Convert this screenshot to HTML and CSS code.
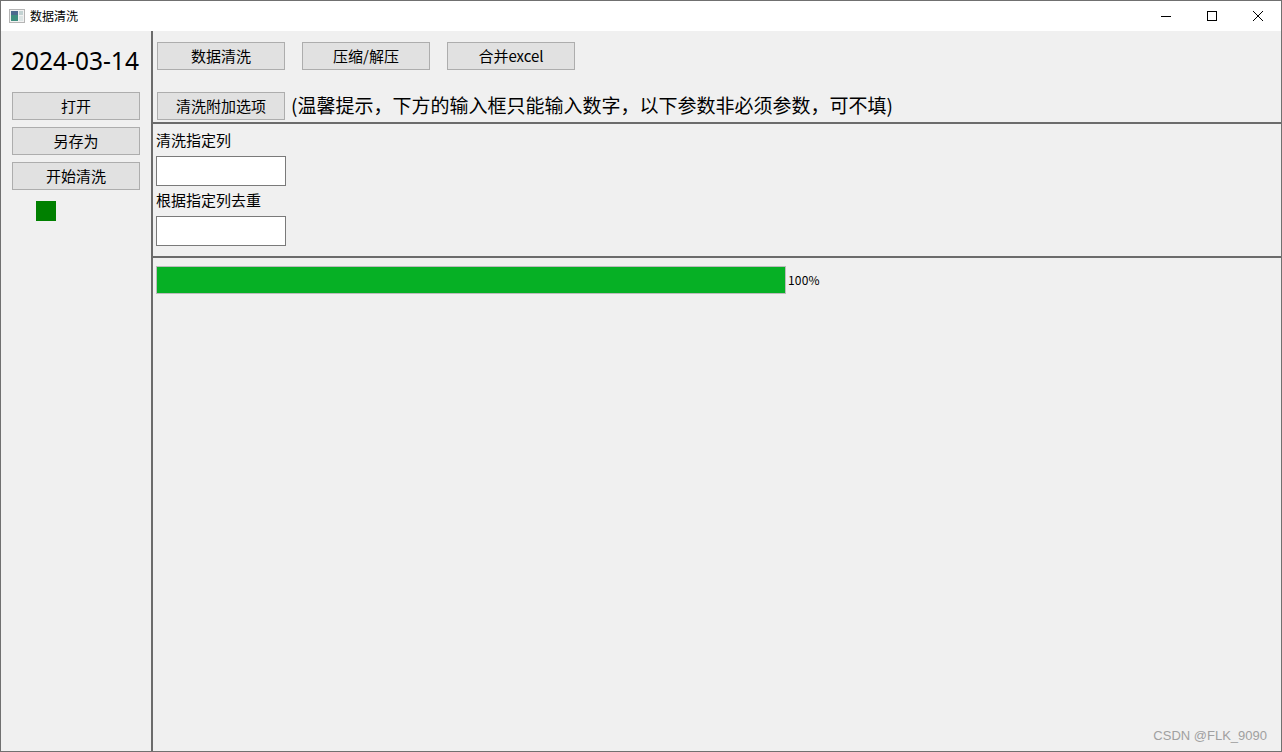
FILE: index.html
```html
<!DOCTYPE html>
<html lang="zh">

<head>
    <meta charset="utf-8">
    <meta name="viewport" content="width=device-width, initial-scale=1.0">
    <title>数据清洗</title>
    <link rel="stylesheet" href="styles.css">
</head>

<body>
    <div class="window">
        <header class="titlebar">
            <svg class="app_icon" width="16" height="14" viewBox="0 0 16 14">
                <rect x="0.5" y="0.5" width="15" height="13" fill="#f2f2f2" stroke="#b5b5b5" />
                <rect x="2" y="2" width="7" height="10" fill="#3f8f7f" />
                <rect x="2" y="2" width="7" height="4" fill="#4d6a8f" />
                <rect x="10" y="2" width="4" height="4" fill="#c3d3d3" />
                <rect x="10" y="7" width="4" height="5" fill="#dde5e5" />
            </svg>
            <span class="title">数据清洗</span>
            <div class="win_controls">
                <svg class="win_btn" width="46" height="30" viewBox="0 0 46 30">
                    <path d="M18 15.5H28" stroke="#000" fill="none" />
                </svg>
                <svg class="win_btn" width="46" height="30" viewBox="0 0 46 30">
                    <rect x="18.5" y="10.5" width="9" height="9" stroke="#000" fill="none" />
                </svg>
                <svg class="win_btn" width="46" height="30" viewBox="0 0 46 30">
                    <path d="M18 10L28 20M28 10L18 20" stroke="#000" fill="none" />
                </svg>
            </div>
        </header>

        <div class="content">
            <aside class="sidebar">
                <p class="date">2024-03-14</p>
                <button class="knap">打开</button>
                <button class="knap">另存为</button>
                <button class="knap">开始清洗</button>
                <div class="status"></div>
            </aside>

            <main class="main">
                <section class="top_section">
                    <div class="tabs">
                        <button class="knap">数据清洗</button>
                        <button class="knap">压缩/解压</button>
                        <button class="knap">合并excel</button>
                    </div>
                    <div class="hint_row">
                        <button class="knap">清洗附加选项</button>
                        <span class="hint">(温馨提示，下方的输入框只能输入数字，以下参数非必须参数，可不填)</span>
                    </div>
                </section>

                <section class="options">
                    <label class="felt_label">清洗指定列</label>
                    <input class="felt" type="text">
                    <label class="felt_label">根据指定列去重</label>
                    <input class="felt" type="text">
                </section>

                <section class="progress_section">
                    <div class="progress">
                        <div class="progress_fill"></div>
                    </div>
                    <span class="progress_text">100%</span>
                </section>
            </main>
        </div>
        <span class="watermark">CSDN @FLK_9090</span>
    </div>
</body>

</html>
```

FILE: styles.css
```css
* {
    box-sizing: border-box;
}

html,
body {
    margin: 0;
    height: 100%;
    overflow: hidden;
}

body {
    font-family: "Noto Sans CJK SC", "Liberation Sans", sans-serif;
    color: #000;
    background-color: #f0f0f0;
}

.window {
    position: relative;
    display: flex;
    flex-direction: column;
    height: 752px;
    border: 1px solid #707070;
}

.titlebar {
    display: flex;
    align-items: center;
    height: 30px;
    padding-left: 8px;
    background-color: #fff;
}

.app_icon {
    flex: none;
}

.title {
    margin-left: 5px;
    padding-bottom: 2px;
    font-size: 12px;
}

.win_controls {
    display: flex;
    margin-left: auto;
}

.win_btn {
    display: block;
}

.content {
    flex: 1;
    display: flex;
    min-height: 0;
}

.sidebar {
    flex: none;
    display: flex;
    flex-direction: column;
    align-items: flex-start;
    width: 152px;
    padding-left: 10px;
    border-right: 2px solid #6b6b6b;
}

.date {
    width: 130px;
    height: 61px;
    margin: 0;
    font-family: "Noto Sans", "Liberation Sans", sans-serif;
    font-size: 24.5px;
    line-height: 59px;
    white-space: nowrap;
}

.knap {
    flex: none;
    width: 128px;
    height: 28px;
    padding: 0 0 2px;
    border: 1px solid #adadad;
    border-radius: 0;
    background-color: #e1e1e1;
    font-family: inherit;
    font-size: 15px;
    color: #000;
}

.sidebar .knap {
    margin-left: 1px;
    margin-bottom: 7px;
}

.status {
    width: 20px;
    height: 20px;
    margin: 4px 0 0 25px;
    background-color: #008000;
}

.main {
    flex: 1;
    display: flex;
    flex-direction: column;
    min-width: 0;
}

.top_section {
    height: 93px;
    padding: 11px 0 0 4px;
    border-bottom: 2px solid #6b6b6b;
}

.tabs {
    display: flex;
    gap: 17px;
}

.hint_row {
    display: flex;
    align-items: center;
    margin-top: 22px;
}

.hint {
    margin-left: 6px;
    padding-bottom: 2px;
    font-size: 19px;
    line-height: 24px;
    white-space: nowrap;
}

.options {
    display: flex;
    flex-direction: column;
    align-items: flex-start;
    height: 134px;
    padding: 2px 0 0 3px;
    border-bottom: 2px solid #6b6b6b;
}

.felt_label {
    height: 30px;
    font-size: 15px;
    line-height: 28px;
}

.felt {
    width: 130px;
    height: 30px;
    border: 1px solid #7a7a7a;
    border-radius: 0;
    background-color: #fff;
}

.progress_section {
    display: flex;
    align-items: center;
    padding: 8px 0 0 3px;
}

.progress {
    width: 630px;
    height: 28px;
    border: 1px solid #bcbcbc;
    background-color: #e6e6e6;
}

.progress_fill {
    width: 100%;
    height: 100%;
    background-color: #06b025;
}

.progress_text {
    margin-left: 2px;
    padding-bottom: 2px;
    font-size: 12px;
    letter-spacing: 0.2px;
}

.watermark {
    position: absolute;
    right: 14px;
    bottom: 8px;
    font-family: "Liberation Sans", sans-serif;
    font-size: 13px;
    color: #a0a0a0;
}
```
